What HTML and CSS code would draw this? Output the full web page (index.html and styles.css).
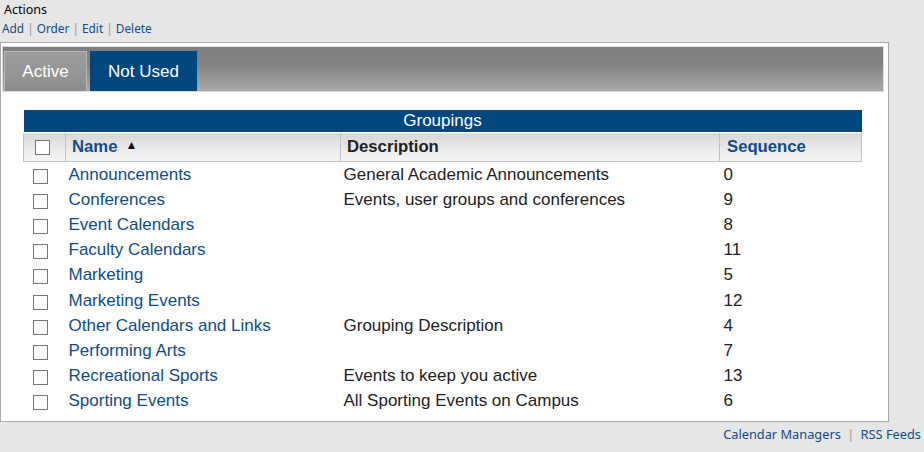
FILE: index.html
```html
<!DOCTYPE html>
<html>
<head>
<meta charset="utf-8">
<link rel="stylesheet" href="styles.css">
</head>
<body>
<div class="actions">
  <div class="actions-title">Actions</div>
  <div class="actions-links"><a href="#">Add</a> <span class="sep">|</span> <a href="#">Order</a> <span class="sep">|</span> <a href="#">Edit</a> <span class="sep">|</span> <a href="#">Delete</a></div>
</div>
<div class="panel">
  <div class="tabbar">
    <div class="tab tab-active">Active</div>
    <div class="tab tab-current">Not Used</div>
  </div>
  <table class="grid">
    <colgroup>
      <col class="col-check">
      <col class="col-name">
      <col class="col-desc">
      <col class="col-seq">
    </colgroup>
    <thead>
      <tr><th class="caption" colspan="4">Groupings</th></tr>
      <tr class="colhead">
        <th class="c-check"><span class="box"></span></th>
        <th class="c-name"><a href="#">Name</a><span class="sort">&#9650;</span></th>
        <th class="c-desc">Description</th>
        <th class="c-seq"><a href="#">Sequence</a></th>
      </tr>
    </thead>
    <tbody>
      <tr><td class="c-check"><span class="box"></span></td><td><a href="#">Announcements</a></td><td>General Academic Announcements</td><td class="c-num">0</td></tr>
      <tr><td class="c-check"><span class="box"></span></td><td><a href="#">Conferences</a></td><td>Events, user groups and conferences</td><td class="c-num">9</td></tr>
      <tr><td class="c-check"><span class="box"></span></td><td><a href="#">Event Calendars</a></td><td></td><td class="c-num">8</td></tr>
      <tr><td class="c-check"><span class="box"></span></td><td><a href="#">Faculty Calendars</a></td><td></td><td class="c-num">11</td></tr>
      <tr><td class="c-check"><span class="box"></span></td><td><a href="#">Marketing</a></td><td></td><td class="c-num">5</td></tr>
      <tr><td class="c-check"><span class="box"></span></td><td><a href="#">Marketing Events</a></td><td></td><td class="c-num">12</td></tr>
      <tr><td class="c-check"><span class="box"></span></td><td><a href="#">Other Calendars and Links</a></td><td>Grouping Description</td><td class="c-num">4</td></tr>
      <tr><td class="c-check"><span class="box"></span></td><td><a href="#">Performing Arts</a></td><td></td><td class="c-num">7</td></tr>
      <tr><td class="c-check"><span class="box"></span></td><td><a href="#">Recreational Sports</a></td><td>Events to keep you active</td><td class="c-num">13</td></tr>
      <tr><td class="c-check"><span class="box"></span></td><td><a href="#">Sporting Events</a></td><td>All Sporting Events on Campus</td><td class="c-num">6</td></tr>
    </tbody>
  </table>
</div>
<div class="footer"><a href="#">Calendar Managers</a> <span class="sep">|</span> <a href="#">RSS Feeds</a></div>
</body>
</html>
```
FILE: styles.css
```css
html, body {
  margin: 0;
  padding: 0;
  background: #e6e6e6;
  font-family: "Liberation Sans", Arial, sans-serif;
}
a {
  color: #0f4c88;
  text-decoration: none;
}
.actions {
  font-family: "Noto Sans", "Open Sans", sans-serif;
  font-size: 12px;
  padding: 0 0 0 2px;
  height: 42px;
}
.actions-title {
  color: #000;
  padding-left: 2px;
  line-height: 20px;
  font-size: 12.5px;
}
.actions-links {
  line-height: 16px;
  font-size: 11.8px;
}
.sep {
  color: #999;
}
.panel {
  background: #fff;
  border: 1px solid #aaa;
  padding: 3px 0 0 0;
  box-sizing: border-box;
  width: 889px;
  height: 380px;
}
.tabbar {
  margin: 0 4px 0 1px;
  height: 46px;
  box-sizing: border-box;
  border: 1px solid #dcdcdc;
  background: linear-gradient(to bottom, #7e7e7e 0%, #838383 40%, #a9a9a9 100%);
  display: flex;
  align-items: flex-end;
  gap: 3px;
  padding-left: 1px;
}
.tab {
  height: 40px;
  box-sizing: border-box;
  color: #fff;
  font-size: 17px;
  display: flex;
  align-items: center;
  justify-content: center;
  padding-top: 1px;
}
.tab-active {
  width: 83px;
  background: linear-gradient(to bottom, #9c9c9c 0%, #959595 60%, #8a8a8a 100%);
  border: 1px solid #b8b8b8;
  border-bottom: none;
}
.tab-current {
  width: 107px;
  background: #00467f;
}
.grid {
  margin: 18px 0 0 22px;
  width: 838px;
  table-layout: fixed;
  border-collapse: collapse;
  font-size: 17px;
  color: #222;
}
.col-check { width: 42px; }
.col-name { width: 275px; }
.col-desc { width: 379px; }
.col-seq { width: 142px; }
.grid th.caption {
  background: #00467f;
  color: #fff;
  font-weight: normal;
  font-size: 17px;
  height: 22px;
  padding: 0;
  text-align: center;
  border-bottom: 1px solid #fff;
}
.colhead th {
  height: 28px;
  padding: 0 6px;
  text-align: left;
  background: linear-gradient(to bottom, #d6d6d6 0%, #ececec 60%, #f4f4f4 100%);
  border: 1px solid #c2c2c2;
  font-weight: bold;
  font-size: 16.7px;
  color: #222;
}
.colhead th a {
  color: #0f4c88;
}
.colhead th.c-check {
  text-align: left;
  padding: 0 0 0 11px;
}
.colhead th.c-name { padding-left: 6px; }
.colhead th.c-seq { padding-left: 7px; }
.sort {
  font-size: 12px;
  color: #111;
  margin-left: 8px;
  vertical-align: 3px;
}
.box {
  display: inline-block;
  width: 13px;
  height: 13px;
  border: 1px solid #777;
  background: #fff;
  vertical-align: middle;
}
.grid td {
  height: 25.2px;
  padding: 0 0 0 3px;
  line-height: 20px;
  vertical-align: middle;
  white-space: nowrap;
}
.grid td.c-check {
  padding: 0 0 0 9px;
}
.grid td.c-check .box {
  vertical-align: -4px;
}
.grid td.c-num {
  padding-left: 4px;
}
.footer {
  font-family: "Noto Sans", "Open Sans", sans-serif;
  font-size: 12.8px;
  text-align: right;
  padding: 3px 3px 0 0;
  line-height: 18px;
}
.footer .sep {
  color: #999;
  margin: 0 3px;
}
```
